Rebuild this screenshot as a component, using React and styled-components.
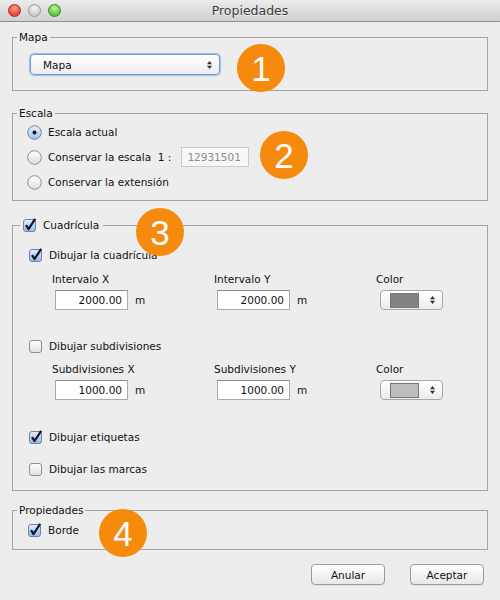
import React from 'react'
import styled, { createGlobalStyle } from 'styled-components'

const GlobalStyle = createGlobalStyle`
  html, body {
    margin: 0;
    padding: 0;
    background: #ededed;
  }
  body {
    font-family: "DejaVu Sans", "Lucida Grande", sans-serif;
    font-size: 10.5px;
    color: #111;
  }
`

const lightColors = {
  red: ['#ff9a90', '#e5463d', '#a82620'],
  grey: ['#f6f6f6', '#cbcbcb', '#9a9a9a'],
  green: ['#c0f59a', '#5fc43c', '#2f8a1a'],
}

function Checkbox({ checked }) {
  const id = checked ? 'chkOn' : 'chkOff'
  return (
    <svg width="15" height="15" viewBox="0 0 15 15">
      <defs>
        <linearGradient id={id} x1="0" y1="0" x2="0" y2="1">
          <stop offset="0" stopColor={checked ? '#e4eefb' : '#ffffff'} />
          <stop offset="1" stopColor={checked ? '#96bbea' : '#e0e0e0'} />
        </linearGradient>
      </defs>
      <rect
        x="1.5"
        y="1.5"
        width="12"
        height="12"
        rx="2.5"
        fill={`url(#${id})`}
        stroke={checked ? '#6d84a6' : '#8e8e8e'}
      />
      {checked && (
        <path
          d="M4 7.2 L6.6 11 L13.2 0.8"
          fill="none"
          stroke="#16192b"
          strokeWidth="2.3"
          strokeLinejoin="round"
        />
      )}
    </svg>
  )
}

function Radio({ checked }) {
  const id = checked ? 'radOn' : 'radOff'
  return (
    <svg width="15" height="15" viewBox="0 0 15 15">
      <defs>
        <linearGradient id={id} x1="0" y1="0" x2="0" y2="1">
          <stop offset="0" stopColor={checked ? '#e6effb' : '#ffffff'} />
          <stop offset="1" stopColor={checked ? '#9fc1ea' : '#dedede'} />
        </linearGradient>
      </defs>
      <circle
        cx="7.5"
        cy="7.5"
        r="6.8"
        fill={`url(#${id})`}
        stroke={checked ? '#6f86a8' : '#8e8e8e'}
        strokeWidth="1"
      />
      {checked && <circle cx="7.5" cy="7.5" r="2" fill="#111" />}
    </svg>
  )
}

function Arrows() {
  return (
    <svg width="7" height="12" viewBox="0 0 7 12">
      <path d="M3.5 2 L6 5.2 L1 5.2 Z" fill="#333" />
      <path d="M3.5 10 L6 6.8 L1 6.8 Z" fill="#333" />
    </svg>
  )
}

function NumberField({ value }) {
  return (
    <ValueRow>
      <NumberInput>{value}</NumberInput>
      <Unit>m</Unit>
    </ValueRow>
  )
}

function ColorPicker({ swatch }) {
  return (
    <ColorCombo>
      <Swatch $color={swatch} />
      <Arrows />
    </ColorCombo>
  )
}

export default function App() {
  return (
    <Window>
      <GlobalStyle />
      <TitleBar>
        <Lights>
          <Light $color="red" />
          <Light $color="grey" />
          <Light $color="green" />
        </Lights>
        <Title>Propiedades</Title>
        <span />
      </TitleBar>

      <Content>
        <Group $top={8}>
          <Frame>
            <Legend>Mapa</Legend>
            <FrameBody $pad="10px 0 15px 17px">
              <Combo>
                <span>Mapa</span>
                <Arrows />
              </Combo>
            </FrameBody>
          </Frame>
          <Badge $left={225} $top={14}>1</Badge>
        </Group>

        <Group $top={15}>
          <Frame>
            <Legend>Escala</Legend>
            <FrameBody $pad="2px 0 8px 14px">
              <Stack $gap={5}>
                <Row>
                  <Radio checked />
                  <span>Escala actual</span>
                </Row>
                <Row>
                  <Radio />
                  <span>Conservar la escala&nbsp;&nbsp;1 :</span>
                  <ScaleInput>12931501</ScaleInput>
                </Row>
                <Row>
                  <Radio />
                  <span>Conservar la extensión</span>
                </Row>
              </Stack>
            </FrameBody>
          </Frame>
          <Badge $left={248} $top={25}>2</Badge>
        </Group>

        <Group $top={17}>
          <Frame>
            <Legend $offset={7}>
              <Checkbox checked />
              <span>Cuadrícula</span>
            </Legend>
            <FrameBody $pad="13px 0 11px 15px">
              <Row>
                <Checkbox checked />
                <span>Dibujar la cuadrícula</span>
              </Row>
              <FieldGrid $top={7}>
                <FieldCell>
                  <FieldLabel>Intervalo X</FieldLabel>
                  <NumberField value="2000.00" />
                </FieldCell>
                <FieldCell>
                  <FieldLabel>Intervalo Y</FieldLabel>
                  <NumberField value="2000.00" />
                </FieldCell>
                <FieldCell>
                  <FieldLabel>Color</FieldLabel>
                  <ColorPicker swatch="#838383" />
                </FieldCell>
              </FieldGrid>
              <Row $top={26}>
                <Checkbox />
                <span>Dibujar subdivisiones</span>
              </Row>
              <FieldGrid $top={6}>
                <FieldCell>
                  <FieldLabel>Subdivisiones X</FieldLabel>
                  <NumberField value="1000.00" />
                </FieldCell>
                <FieldCell>
                  <FieldLabel>Subdivisiones Y</FieldLabel>
                  <NumberField value="1000.00" />
                </FieldCell>
                <FieldCell>
                  <FieldLabel>Color</FieldLabel>
                  <ColorPicker swatch="#bdbdbd" />
                </FieldCell>
              </FieldGrid>
              <Row $top={27}>
                <Checkbox checked />
                <span>Dibujar etiquetas</span>
              </Row>
              <Row $top={12}>
                <Checkbox />
                <span>Dibujar las marcas</span>
              </Row>
            </FrameBody>
          </Frame>
          <Badge $left={124} $top={-10}>3</Badge>
        </Group>

        <Group $top={12}>
          <Frame>
            <Legend>Propiedades</Legend>
            <FrameBody $pad="3px 0 9px 14px">
              <Row>
                <Checkbox checked />
                <span>Borde</span>
              </Row>
            </FrameBody>
          </Frame>
          <Badge $left={87} $top={6}>4</Badge>
        </Group>

        <ButtonRow>
          <Button>Anular</Button>
          <Button>Aceptar</Button>
        </ButtonRow>
      </Content>
    </Window>
  )
}

const Window = styled.div`
  width: 500px;
  height: 600px;
  background: #ededed;
  display: flex;
  flex-direction: column;
  overflow: hidden;
`

const TitleBar = styled.div`
  height: 21px;
  border-bottom: 1px solid #8f8f8f;
  background: linear-gradient(#ececec, #d0d0d0);
  display: grid;
  grid-template-columns: 1fr auto 1fr;
  align-items: center;
`

const Lights = styled.div`
  display: flex;
  gap: 7px;
  padding-left: 8px;
`

const Light = styled.span`
  width: 13px;
  height: 13px;
  border-radius: 50%;
  box-sizing: border-box;
  border: 1px solid ${p => lightColors[p.$color][2]};
  background: radial-gradient(
    circle at 50% 30%,
    ${p => lightColors[p.$color][0]},
    ${p => lightColors[p.$color][1]} 70%
  );
`

const Title = styled.div`
  font-size: 12.5px;
  color: #3b3b3b;
  text-shadow: 0 1px 0 rgba(255, 255, 255, 0.6);
`

const Content = styled.div`
  padding: 0 12px;
  display: flex;
  flex-direction: column;
`

const Group = styled.div`
  position: relative;
  margin-top: ${p => p.$top}px;
`

const Frame = styled.fieldset`
  margin: 0;
  padding: 0;
  border: 1px solid #a4a4a4;
  min-width: 0;
`

const FrameBody = styled.div`
  padding: ${p => p.$pad};
`

const Legend = styled.legend`
  margin-left: ${p => p.$offset ?? 4}px;
  padding: 0 ${p => (p.$offset ? 4 : 2)}px 0 2px;
  line-height: 14px;
  height: 14px;
  display: flex;
  align-items: center;
  gap: 6px;
  color: #111;
`

const Badge = styled.div`
  position: absolute;
  left: ${p => p.$left}px;
  top: ${p => p.$top}px;
  width: 48px;
  height: 48px;
  border-radius: 50%;
  background: #f68a0c;
  color: #fff;
  font-family: "Liberation Sans", Arial, sans-serif;
  font-size: 35px;
  display: flex;
  align-items: center;
  justify-content: center;
  line-height: 1;
`

const Combo = styled.div`
  width: 190px;
  height: 21px;
  box-sizing: border-box;
  border: 1px solid #6f9ad6;
  box-shadow: 0 0 1px 1px rgba(130, 170, 225, 0.7);
  border-radius: 4px;
  background: linear-gradient(#ffffff, #ededed);
  display: flex;
  align-items: center;
  justify-content: space-between;
  padding: 0 6px 0 12px;
`

const Stack = styled.div`
  display: flex;
  flex-direction: column;
  gap: ${p => p.$gap}px;
`

const Row = styled.div`
  display: flex;
  align-items: center;
  gap: 6px;
  height: 20px;
  margin-top: ${p => p.$top ?? 0}px;
`

const ScaleInput = styled.div`
  margin-left: 4px;
  width: 68px;
  height: 20px;
  box-sizing: border-box;
  border: 1px solid #cbcbcb;
  background: #f7f7f7;
  color: #8d8d8d;
  padding-left: 5px;
  display: flex;
  align-items: center;
`

const FieldGrid = styled.div`
  display: grid;
  grid-template-columns: repeat(3, 162px);
  margin-left: 24px;
  margin-top: ${p => p.$top}px;
`

const FieldCell = styled.div`
  display: flex;
  flex-direction: column;
  gap: 4px;
`

const FieldLabel = styled.div`
  line-height: 14px;
`

const ValueRow = styled.div`
  display: flex;
  align-items: center;
  gap: 7px;
  margin-left: 3px;
`

const NumberInput = styled.div`
  width: 73px;
  height: 20px;
  box-sizing: border-box;
  border: 1px solid #ababab;
  border-top-color: #8d8d8d;
  background: #fff;
  text-align: right;
  padding-right: 5px;
  line-height: 18px;
`

const Unit = styled.span``

const ColorCombo = styled.div`
  margin-left: 4px;
  width: 63px;
  height: 20px;
  box-sizing: border-box;
  border: 1px solid #a8a8a8;
  border-radius: 4px;
  background: linear-gradient(#ffffff, #ececec);
  display: flex;
  align-items: center;
  justify-content: space-between;
  padding: 0 6px 0 9px;
`

const Swatch = styled.span`
  width: 29px;
  height: 15px;
  box-sizing: border-box;
  border: 1px solid #777;
  background: ${p => p.$color};
`

const ButtonRow = styled.div`
  display: flex;
  justify-content: flex-end;
  gap: 25px;
  margin-top: 14px;
  padding-right: 4px;
`

const Button = styled.div`
  width: 74px;
  height: 21px;
  box-sizing: border-box;
  border: 1px solid #9b9b9b;
  border-radius: 4px;
  background: linear-gradient(#ffffff, #f3f3f3 50%, #e8e8e8);
  box-shadow: 0 1px 0 rgba(0, 0, 0, 0.06);
  display: flex;
  align-items: center;
  justify-content: center;
`
